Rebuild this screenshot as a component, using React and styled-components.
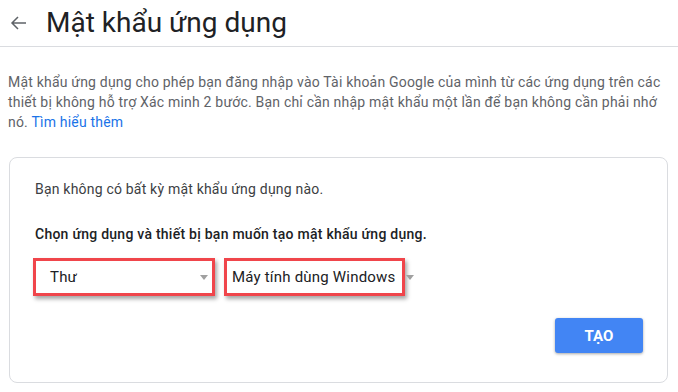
import React from 'react';
import styled, { createGlobalStyle } from 'styled-components';

const GlobalStyle = createGlobalStyle`
  html, body {
    margin: 0;
    padding: 0;
    background: #fff;
  }
  body {
    font-family: Roboto, "Noto Sans", Arial, sans-serif;
    color: #202124;
  }
`;

const Page = styled.div`
  width: 678px;
  height: 392px;
  overflow: hidden;
`;

const Header = styled.header`
  display: flex;
  align-items: center;
  height: 46px;
  border-bottom: 1px solid #dadce0;
  padding-left: 8px;
`;

const BackButton = styled.button`
  display: flex;
  align-items: center;
  justify-content: center;
  width: 20px;
  height: 20px;
  padding: 0;
  border: none;
  background: none;
  color: #5f6368;
  margin-right: 18px;
`;

const Title = styled.h1`
  margin: 0;
  font-size: 28px;
  font-weight: 400;
  color: #202124;
  line-height: 36px;
`;

const Intro = styled.p`
  margin: 0;
  padding: 25px 8px 0 8px;
  font-size: 14px;
  line-height: 20px;
  letter-spacing: 0.2px;
  color: #5f6368;

  a {
    color: #1a73e8;
    text-decoration: none;
  }
`;

const Card = styled.section`
  margin: 25px 10px 0 9px;
  border: 1px solid #dadce0;
  border-radius: 8px;
  padding: 21px 24px 29px 25px;
`;

const Note = styled.div`
  font-size: 14px;
  line-height: 20px;
  letter-spacing: 0.2px;
  color: #3c4043;
`;

const Prompt = styled.div`
  margin-top: 25px;
  font-size: 14px;
  line-height: 20px;
  letter-spacing: 0.25px;
  font-weight: 500;
  color: #202124;
`;

const SelectRow = styled.div`
  display: flex;
  align-items: center;
  gap: 9px;
  margin-top: 14px;
  margin-left: -2px;
`;

const Select = styled.div`
  display: flex;
  align-items: center;
`;

const Highlight = styled.div`
  display: flex;
  align-items: center;
  box-sizing: border-box;
  width: ${p => p.$width}px;
  height: 38px;
  border: 3px solid #f0454b;
  box-shadow: 2px 3px 4px rgba(0, 0, 0, 0.35);
  padding: 0 ${p => p.$padRight}px 0 ${p => p.$padLeft}px;
  background: #fff;
`;

const Value = styled.span`
  flex: 1;
  font-size: 15px;
  letter-spacing: 0.2px;
  color: #202124;
  white-space: nowrap;
`;

const Caret = styled.span`
  width: 0;
  height: 0;
  border-left: 4.5px solid transparent;
  border-right: 4.5px solid transparent;
  border-top: 5px solid #a0a0a0;
  margin-left: ${p => p.$gap || 0}px;
`;

const Actions = styled.div`
  display: flex;
  justify-content: flex-end;
  margin-top: 22px;
`;

const PrimaryButton = styled.button`
  width: 88px;
  height: 35px;
  border: none;
  border-radius: 3px;
  background: #4285f4;
  color: #fff;
  font-family: Roboto, Arial, sans-serif;
  font-size: 15px;
  font-weight: 700;
  box-shadow: 0 1px 3px rgba(0, 0, 0, 0.35);
  cursor: pointer;
`;

const ArrowBack = () => (
  <svg width="17" height="16" viewBox="0 0 17 16" fill="none">
    <path d="M16 8H2M8 2L2 8l6 6" stroke="currentColor" strokeWidth="1.5" />
  </svg>
);

export default function App() {
  return (
    <Page>
      <GlobalStyle />
      <Header>
        <BackButton aria-label="Quay lại"><ArrowBack /></BackButton>
        <Title>Mật khẩu ứng dụng</Title>
      </Header>

      <Intro>
        Mật khẩu ứng dụng cho phép bạn đăng nhập vào Tài khoản Google của mình từ các ứng dụng trên các
        thiết bị không hỗ trợ Xác minh 2 bước. Bạn chỉ cần nhập mật khẩu một lần để bạn không cần phải nhớ
        nó. <a href="#">Tìm hiểu thêm</a>
      </Intro>

      <Card>
        <Note>Bạn không có bất kỳ mật khẩu ứng dụng nào.</Note>
        <Prompt>Chọn ứng dụng và thiết bị bạn muốn tạo mật khẩu ứng dụng.</Prompt>

        <SelectRow>
          <Select>
            <Highlight $width={182} $padLeft={14} $padRight={4}>
              <Value>Thư</Value>
              <Caret />
            </Highlight>
          </Select>
          <Select>
            <Highlight $width={181} $padLeft={5} $padRight={0}>
              <Value>Máy tính dùng Windows</Value>
            </Highlight>
            <Caret $gap={1} />
          </Select>
        </SelectRow>

        <Actions>
          <PrimaryButton>TẠO</PrimaryButton>
        </Actions>
      </Card>
    </Page>
  );
}
